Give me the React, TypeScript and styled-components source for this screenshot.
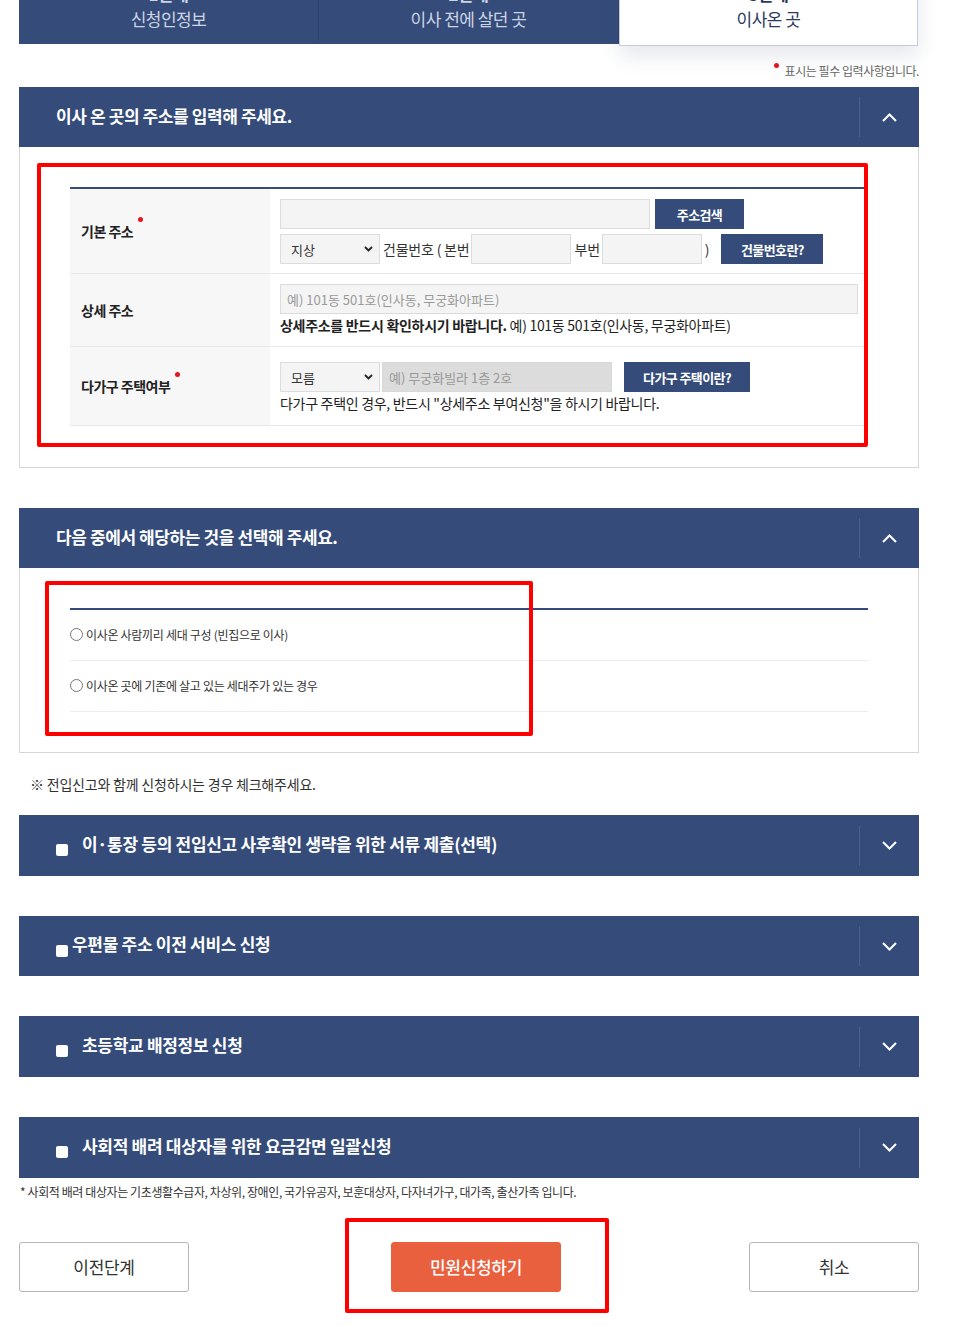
import React from "react";
import styled, { createGlobalStyle } from "styled-components";

const NAVY = "#354c7a";
const FONT = `"Noto Sans CJK KR", "Noto Sans", sans-serif`;

const GlobalStyle = createGlobalStyle`
  html, body { margin: 0; padding: 0; background: #fff; }
  body { font-family: ${FONT}; color: #333; }
  * { box-sizing: border-box; }
  button, input, select { font-family: ${FONT}; }
`;

const Page = styled.div`
  display: flow-root;
  width: 919px;
  padding-left: 19px;
  padding-bottom: 30px;
`;

/* ---------- step bar ---------- */
const StepBar = styled.div`
  display: flex;
  align-items: flex-start;
  margin-top: -26px;
`;

const Step = styled.div<{ $active?: boolean }>`
  width: ${(p) => (p.$active ? "299px" : "300px")};
  height: ${(p) => (p.$active ? "72px" : "70px")};
  padding-top: 7px;
  text-align: center;
  font-size: 17px;
  line-height: 25px;
  letter-spacing: -0.5px;
  background: ${(p) => (p.$active ? "#fff" : NAVY)};
  color: ${(p) => (p.$active ? "#2b3a5c" : "#cdd5e4")};
  border-right: 1px solid ${(p) => (p.$active ? "#c3cbdd" : "#2f4470")};
  ${(p) =>
    p.$active &&
    `border-left: 1px solid #c3cbdd;
     border-bottom: 1px solid #c3cbdd;
     box-shadow: 0 10px 20px rgba(40, 60, 110, 0.12);`}
`;

const StepNum = styled.span`
  display: block;
  font-weight: 700;
`;

const StepName = styled.span`
  display: block;
`;

/* ---------- required note ---------- */
const RequiredNote = styled.p`
  margin: 17px 0 8px;
  text-align: right;
  font-size: 12px;
  line-height: 16px;
  letter-spacing: -0.45px;
  color: #666;
`;

const NoteDot = styled.span`
  display: inline-block;
  width: 5px;
  height: 5px;
  border-radius: 50%;
  background: #e8141b;
  vertical-align: top;
  margin-right: 6px;
`;

/* ---------- section ---------- */
const Section = styled.section<{ $mt?: number }>`
  margin-top: ${(p) => p.$mt ?? 0}px;
`;

const BarHeader = styled.div`
  display: flex;
  align-items: center;
  height: 60px;
  background: ${NAVY};
  padding-left: 37px;
`;

const BarTitle = styled.h2`
  flex: 1;
  margin: 0 0 2px;
  font-size: 17px;
  line-height: 24px;
  font-weight: 700;
  color: #fff;
  letter-spacing: -0.4px;
`;

const BarDivider = styled.span`
  width: 1px;
  height: 40px;
  background: rgba(255, 255, 255, 0.12);
`;

const BarToggle = styled.span`
  width: 59px;
  display: flex;
  align-items: center;
  justify-content: center;
`;

const SectionBody = styled.div<{ $pb: number }>`
  position: relative;
  border: 1px solid #d6d6d6;
  border-top: none;
  padding: 40px 50px ${(p) => p.$pb}px;
`;

const Highlight = styled.div<{ $x: number; $y: number; $w: number; $h: number }>`
  position: absolute;
  left: ${(p) => p.$x}px;
  top: ${(p) => p.$y}px;
  width: ${(p) => p.$w}px;
  height: ${(p) => p.$h}px;
  border: 4px solid #ff0000;
  border-radius: 2px;
  pointer-events: none;
`;

/* ---------- form table ---------- */
const FormTable = styled.div`
  border-top: 2px solid ${NAVY};
`;

const FormRow = styled.div`
  display: flex;
  border-bottom: 1px solid #e8e8e8;
`;

const LabelCell = styled.div`
  width: 200px;
  flex-shrink: 0;
  display: flex;
  align-items: center;
  padding-left: 11px;
  background: #f7f7f7;
  font-size: 14px;
  line-height: 20px;
  font-weight: 700;
  color: #222;
  letter-spacing: -0.5px;
`;

const ReqDot = styled.span`
  display: inline-block;
  width: 5px;
  height: 5px;
  border-radius: 50%;
  background: #e8141b;
  vertical-align: top;
  margin: -4px 0 0 5px;
`;

const ValueCell = styled.div<{ $pad?: string }>`
  flex: 1;
  padding: ${(p) => p.$pad ?? "10px"};
  display: flex;
  flex-direction: column;
`;

const Line = styled.div<{ $mt?: number }>`
  display: flex;
  align-items: center;
  margin-top: ${(p) => p.$mt ?? 0}px;
`;

const TextInput = styled.input<{ $w: number; $dim?: boolean; $ml?: number }>`
  width: ${(p) => p.$w}px;
  height: 30px;
  flex-shrink: 0;
  margin-left: ${(p) => p.$ml ?? 0}px;
  border: 1px solid ${(p) => (p.$dim ? "#d8d8d8" : "#dcdcdc")};
  background: ${(p) => (p.$dim ? "#dcdcdc" : "#f4f4f4")};
  padding: 0 6px;
  font-size: 13px;
  color: #333;
  outline: none;
  &::placeholder {
    color: #999;
  }
`;

const NavyButton = styled.button<{ $w: number; $ml?: number }>`
  width: ${(p) => p.$w}px;
  height: 30px;
  flex-shrink: 0;
  margin-left: ${(p) => p.$ml ?? 0}px;
  background: ${NAVY};
  color: #fff;
  border: 0;
  font-size: 13px;
  font-weight: 700;
  letter-spacing: -0.6px;
  cursor: pointer;
`;

const SelectWrap = styled.div<{ $w: number }>`
  position: relative;
  width: ${(p) => p.$w}px;
  height: 30px;
  flex-shrink: 0;
`;

const Select = styled.select`
  appearance: none;
  width: 100%;
  height: 100%;
  border: 1px solid #dcdcdc;
  background: #f4f4f4;
  padding: 0 10px;
  font-size: 13px;
  color: #333;
  outline: none;
`;

const SelectArrow = styled.svg`
  position: absolute;
  right: 7px;
  top: 12px;
  pointer-events: none;
`;

const InlineText = styled.span<{ $ml?: number; $mr?: number }>`
  margin-left: ${(p) => p.$ml ?? 0}px;
  margin-right: ${(p) => p.$mr ?? 0}px;
  font-size: 14px;
  line-height: 20px;
  letter-spacing: -0.2px;
  color: #333;
  white-space: nowrap;
`;

const Help = styled.p`
  margin: 0;
  font-size: 14px;
  line-height: 22px;
  letter-spacing: -0.3px;
  color: #222;
  white-space: nowrap;
  strong {
    font-weight: 700;
  }
`;

/* ---------- radio list ---------- */
const RadioTable = styled.div`
  border-top: 2px solid ${NAVY};
`;

const RadioRow = styled.label`
  display: flex;
  align-items: center;
  height: 51px;
  padding-bottom: 1px;
  border-bottom: 1px solid #ececec;
  font-size: 12px;
  letter-spacing: -0.3px;
  color: #333;
`;

const Radio = styled.input`
  margin: 0 3px 0 0;
  width: 13px;
  height: 13px;
`;

/* ---------- notes & accordions ---------- */
const Notice = styled.p`
  margin: 21px 0 0;
  padding-left: 11px;
  font-size: 14px;
  line-height: 20px;
  letter-spacing: -0.2px;
  color: #333;
`;

const AccordionBar = styled.div<{ $mt: number; $h: number }>`
  display: flex;
  align-items: center;
  height: ${(p) => p.$h}px;
  margin-top: ${(p) => p.$mt}px;
  background: ${NAVY};
  padding-left: 37px;
`;

const CheckSquare = styled.span<{ $gap: number }>`
  width: 12px;
  height: 12px;
  flex-shrink: 0;
  margin: 9px ${(p) => p.$gap}px 0 0;
  background: #fff;
  border-radius: 2px;
`;

const AccordionTitle = styled.h3`
  flex: 1;
  margin: 0 0 4px;
  font-size: 17px;
  line-height: 24px;
  font-weight: 700;
  color: #fff;
  letter-spacing: -0.3px;
`;

const FootNote = styled.p`
  margin: 6px 0 0;
  padding-left: 1px;
  font-size: 12px;
  line-height: 16px;
  letter-spacing: -0.4px;
  color: #333;
  white-space: nowrap;
`;

/* ---------- bottom buttons ---------- */
const ButtonRow = styled.div`
  position: relative;
  display: flex;
  margin-top: 42px;
`;

const OutlineButton = styled.button`
  width: 170px;
  height: 50px;
  padding-bottom: 2px;
  border: 1px solid #b5b5b5;
  border-radius: 3px;
  background: #fff;
  font-size: 17px;
  color: #333;
  letter-spacing: -0.3px;
  cursor: pointer;
`;

const PrimaryButton = styled(OutlineButton)`
  margin-left: 202px;
  background: #e9603f;
  border-color: #e9603f;
  color: #fff;
  font-weight: 500;
`;

const CancelButton = styled(OutlineButton)`
  margin-left: auto;
`;

const Chevron = ({ up }: { up?: boolean }) => (
  <svg width="15" height="9" viewBox="0 0 15 9" fill="none">
    <path
      d={up ? "M1 8 L7.5 1.5 L14 8" : "M1 1 L7.5 7.5 L14 1"}
      stroke="#fff"
      strokeWidth="2"
    />
  </svg>
);

const Arrow = () => (
  <SelectArrow width="9" height="6" viewBox="0 0 9 6">
    <path d="M1 1 L4.5 4.5 L8 1" stroke="#222" strokeWidth="1.8" fill="none" />
  </SelectArrow>
);

const SectionHeader = ({ title, up }: { title: string; up?: boolean }) => (
  <BarHeader>
    <BarTitle>{title}</BarTitle>
    <BarDivider />
    <BarToggle>
      <Chevron up={up} />
    </BarToggle>
  </BarHeader>
);

const accordions = [
  { title: "이·통장 등의 전입신고 사후확인 생략을 위한 서류 제출(선택)", gap: 14, mt: 21, h: 61 },
  { title: "우편물 주소 이전 서비스 신청", gap: 4, mt: 40, h: 60 },
  { title: "초등학교 배정정보 신청", gap: 14, mt: 40, h: 61 },
  { title: "사회적 배려 대상자를 위한 요금감면 일괄신청", gap: 14, mt: 40, h: 61 },
];

export default function App() {
  return (
    <>
      <GlobalStyle />
      <Page>
        <StepBar>
          <Step>
            <StepNum>1단계</StepNum>
            <StepName>신청인정보</StepName>
          </Step>
          <Step>
            <StepNum>2단계</StepNum>
            <StepName>이사 전에 살던 곳</StepName>
          </Step>
          <Step $active>
            <StepNum>3단계</StepNum>
            <StepName>이사온 곳</StepName>
          </Step>
        </StepBar>

        <RequiredNote>
          <NoteDot />
          표시는 필수 입력사항입니다.
        </RequiredNote>

        <Section>
          <SectionHeader title="이사 온 곳의 주소를 입력해 주세요." up />
          <SectionBody $pb={41}>
            <FormTable>
              <FormRow>
                <LabelCell>
                  <span>
                    기본 주소
                    <ReqDot />
                  </span>
                </LabelCell>
                <ValueCell $pad="10px 10px 9px">
                  <Line>
                    <TextInput $w={370} />
                    <NavyButton $w={89} $ml={5}>주소검색</NavyButton>
                  </Line>
                  <Line $mt={5}>
                    <SelectWrap $w={100}>
                      <Select defaultValue="지상">
                        <option>지상</option>
                        <option>지하</option>
                      </Select>
                      <Arrow />
                    </SelectWrap>
                    <InlineText $ml={3} $mr={2}>건물번호 ( 본번</InlineText>
                    <TextInput $w={100} />
                    <InlineText $ml={3} $mr={2}>부번</InlineText>
                    <TextInput $w={100} />
                    <InlineText $ml={3}>)</InlineText>
                    <NavyButton $w={102} $ml={12}>건물번호란?</NavyButton>
                  </Line>
                </ValueCell>
              </FormRow>
              <FormRow>
                <LabelCell>상세 주소</LabelCell>
                <ValueCell $pad="10px">
                  <Line>
                    <TextInput $w={578} placeholder="예) 101동 501호(인사동, 무궁화아파트)" />
                  </Line>
                  <Help>
                    <strong>상세주소를 반드시 확인하시기 바랍니다.</strong> 예) 101동 501호(인사동, 무궁화아파트)
                  </Help>
                </ValueCell>
              </FormRow>
              <FormRow>
                <LabelCell>
                  <span>
                    다가구 주택여부
                    <ReqDot />
                  </span>
                </LabelCell>
                <ValueCell $pad="15px 10px 11px">
                  <Line>
                    <SelectWrap $w={100}>
                      <Select defaultValue="모름">
                        <option>모름</option>
                        <option>예</option>
                        <option>아니오</option>
                      </Select>
                      <Arrow />
                    </SelectWrap>
                    <TextInput $w={230} $dim $ml={2} placeholder="예) 무궁화빌라 1층 2호" />
                    <NavyButton $w={126} $ml={12}>다가구 주택이란?</NavyButton>
                  </Line>
                  <Help>다가구 주택인 경우, 반드시 "상세주소 부여신청"을 하시기 바랍니다.</Help>
                </ValueCell>
              </FormRow>
            </FormTable>
            <Highlight $x={17} $y={16} $w={831} $h={284} />
          </SectionBody>
        </Section>

        <Section $mt={40}>
          <SectionHeader title="다음 중에서 해당하는 것을 선택해 주세요." up />
          <SectionBody $pb={40}>
            <RadioTable>
              <RadioRow>
                <Radio type="radio" name="household" />
                이사온 사람끼리 세대 구성 (빈집으로 이사)
              </RadioRow>
              <RadioRow>
                <Radio type="radio" name="household" />
                이사온 곳에 기존에 살고 있는 세대주가 있는 경우
              </RadioRow>
            </RadioTable>
            <Highlight $x={25} $y={13} $w={488} $h={155} />
          </SectionBody>
        </Section>

        <Notice>※ 전입신고와 함께 신청하시는 경우 체크해주세요.</Notice>

        {accordions.map((a) => (
          <AccordionBar key={a.title} $mt={a.mt} $h={a.h}>
            <CheckSquare $gap={a.gap} />
            <AccordionTitle>{a.title}</AccordionTitle>
            <BarDivider />
            <BarToggle>
              <Chevron />
            </BarToggle>
          </AccordionBar>
        ))}

        <FootNote>
          * 사회적 배려 대상자는 기초생활수급자, 차상위, 장애인, 국가유공자, 보훈대상자, 다자녀가구, 대가족, 출산가족 입니다.
        </FootNote>

        <ButtonRow>
          <OutlineButton>이전단계</OutlineButton>
          <PrimaryButton>민원신청하기</PrimaryButton>
          <CancelButton>취소</CancelButton>
          <Highlight $x={326} $y={-24} $w={264} $h={95} />
        </ButtonRow>
      </Page>
    </>
  );
}
